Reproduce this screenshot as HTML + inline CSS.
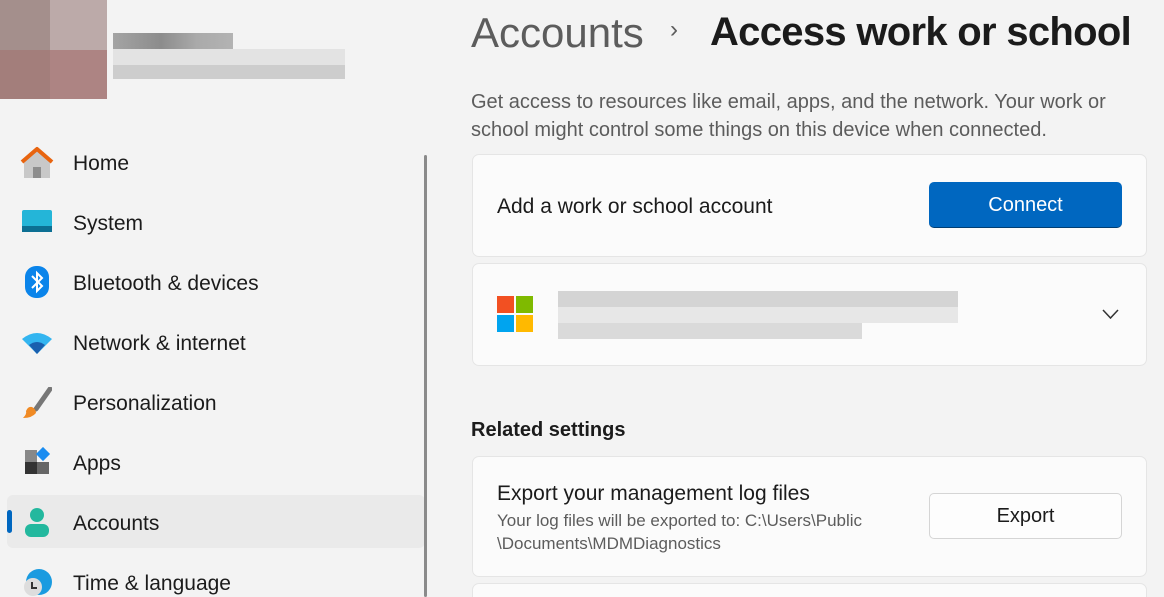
<!DOCTYPE html><html style="overflow:hidden;height:597px"><head><style>
body{margin:0;width:1164px;height:597px;overflow:hidden;background:#f3f3f3;font-family:"Liberation Sans",sans-serif;position:relative;color:#1b1b1b}
.a{position:absolute}
.nav{position:absolute;left:73px;font-size:21px;color:#1b1b1b}
.card{position:absolute;left:472px;width:675px;background:#fbfbfb;border:1px solid #e5e5e5;border-radius:7px;box-sizing:border-box}
.btn{position:absolute;left:929px;width:193px;height:46px;border-radius:5px;font-size:20px;text-align:center;line-height:46px;box-sizing:border-box}
</style></head><body>
<div class="a" style="left:0;top:0;width:50px;height:50px;background:#a48f8c"></div>
<div class="a" style="left:50px;top:0;width:57px;height:50px;background:#bcaaa9"></div>
<div class="a" style="left:0;top:50px;width:50px;height:49px;background:#a37e7b"></div>
<div class="a" style="left:50px;top:50px;width:57px;height:49px;background:#ad8483"></div>
<div class="a" style="left:113px;top:33px;width:120px;height:16px;background:linear-gradient(90deg,#a4a4a4,#8c8c8c 40%,#aaa 70%,#b3b3b3)"></div>
<div class="a" style="left:113px;top:49px;width:232px;height:16px;background:#e3e3e3"></div>
<div class="a" style="left:113px;top:65px;width:232px;height:14px;background:#cdcdcd"></div>

<div class="a" style="left:7px;top:495px;width:418px;height:53px;background:#eaeaea;border-radius:6px"></div>
<div class="a" style="left:7px;top:510px;width:5px;height:23px;background:#0067c0;border-radius:3px"></div>
<div class="a" style="left:424px;top:155px;width:3px;height:442px;background:#8a8a8a;border-radius:2px"></div>

<svg class="a" style="left:20px;top:146px" width="34" height="34" viewBox="0 0 34 34"><path d="M4 15L17 4L30 15V32H4Z" fill="#c8c8c8"/><rect x="13" y="21" width="8" height="11" fill="#8d8d8d"/><path d="M2 16L17 3L32 16" stroke="#e8640f" stroke-width="4" fill="none" stroke-linejoin="round"/></svg>
<div class="nav" style="top:152px">Home</div>
<svg class="a" style="left:22px;top:210px" width="30" height="25"><rect width="30" height="22" rx="2" fill="#24b5d8"/><rect y="16" width="30" height="6" fill="#0c6f93"/></svg>
<div class="nav" style="top:212px">System</div>
<svg class="a" style="left:25px;top:266px" width="24" height="32"><rect width="24" height="32" rx="11" fill="#0a84ea"/><path d="M7 10L17 20L12 25V7L17 12L7 22" stroke="#fff" stroke-width="2" fill="none"/></svg>
<div class="nav" style="top:272px">Bluetooth &amp; devices</div>
<svg class="a" style="left:22px;top:331px" width="30" height="24"><path d="M0 8Q15-4 30 8L15 23Z" fill="#33b5f0"/><path d="M7 14Q15 8 23 14L15 23Z" fill="#1a5fae"/></svg>
<div class="nav" style="top:332px">Network &amp; internet</div>
<svg class="a" style="left:22px;top:387px" width="30" height="32"><path d="M28 2L14 22" stroke="#777" stroke-width="5" stroke-linecap="round"/><path d="M10 20Q14 22 14 26Q10 31 1 31Q5 27 4 24Q6 19 10 20Z" fill="#f08a24"/></svg>
<div class="nav" style="top:392px">Personalization</div>
<svg class="a" style="left:25px;top:447px" width="26" height="28"><rect y="3" width="12" height="12" fill="#888"/><rect y="15" width="12" height="12" fill="#333"/><rect x="12" y="15" width="12" height="12" fill="#666"/><rect x="13" y="2" width="10" height="10" fill="#1a8cf0" transform="rotate(45 18 7)"/></svg>
<div class="nav" style="top:452px">Apps</div>
<svg class="a" style="left:24px;top:507px" width="26" height="30"><circle cx="13" cy="8" r="7" fill="#23b89e"/><rect x="1" y="17" width="24" height="13" rx="6" fill="#23b89e"/></svg>
<div class="nav" style="top:512px">Accounts</div>
<svg class="a" style="left:22px;top:567px" width="32" height="30"><circle cx="17" cy="15" r="13" fill="#1a9be0"/><circle cx="11" cy="20" r="9" fill="#ddd"/><path d="M10 15V21H15" stroke="#333" stroke-width="2" fill="none"/></svg>
<div class="nav" style="top:572px">Time &amp; language</div>

<div class="a" style="left:471px;top:9px;font-size:42px;color:#5c5c5c">Accounts</div>
<div class="a" style="left:670px;top:16px;font-size:24px;color:#5c5c5c">›</div>
<div class="a" style="left:710px;top:10px;font-size:40px;font-weight:bold;color:#1b1b1b;letter-spacing:-0.7px">Access work or school</div>
<div class="a" style="left:471px;top:88px;font-size:20px;color:#5c5c5c;line-height:28px;width:665px">Get access to resources like email, apps, and the network. Your work or school might control some things on this device when connected.</div>

<div class="card" style="top:154px;height:103px"></div>
<div class="a" style="left:497px;top:195px;font-size:21px">Add a work or school account</div>
<div class="btn" style="top:182px;background:#0067c0;color:#fff;border-bottom:1px solid #003e73">Connect</div>

<div class="card" style="top:263px;height:103px"></div>
<div class="a" style="left:497px;top:296px;width:17px;height:17px;background:#f25022"></div>
<div class="a" style="left:516px;top:296px;width:17px;height:17px;background:#7fba00"></div>
<div class="a" style="left:497px;top:315px;width:17px;height:17px;background:#00a4ef"></div>
<div class="a" style="left:516px;top:315px;width:17px;height:17px;background:#ffb900"></div>
<div class="a" style="left:558px;top:291px;width:400px;height:16px;background:#d4d4d4"></div>
<div class="a" style="left:558px;top:307px;width:400px;height:16px;background:#e7e7e7"></div>
<div class="a" style="left:558px;top:323px;width:304px;height:16px;background:#dadada"></div>
<svg class="a" style="left:1102px;top:309px" width="17" height="11"><path d="M1 1L8.5 9L16 1" stroke="#333" stroke-width="1.5" fill="none"/></svg>

<div class="a" style="left:471px;top:419px;font-size:20px;font-weight:bold">Related settings</div>
<div class="card" style="top:456px;height:121px"></div>
<div class="a" style="left:497px;top:482px;font-size:21px">Export your management log files</div>
<div class="a" style="left:497px;top:509px;font-size:17px;color:#5c5c5c;line-height:23px">Your log files will be exported to: C:\Users\Public<br>\Documents\MDMDiagnostics</div>
<div class="btn" style="top:493px;background:#fdfdfd;border:1px solid #d5d5d5;color:#1b1b1b;line-height:44px">Export</div>
<div class="card" style="top:583px;height:30px"></div>
</body></html>
